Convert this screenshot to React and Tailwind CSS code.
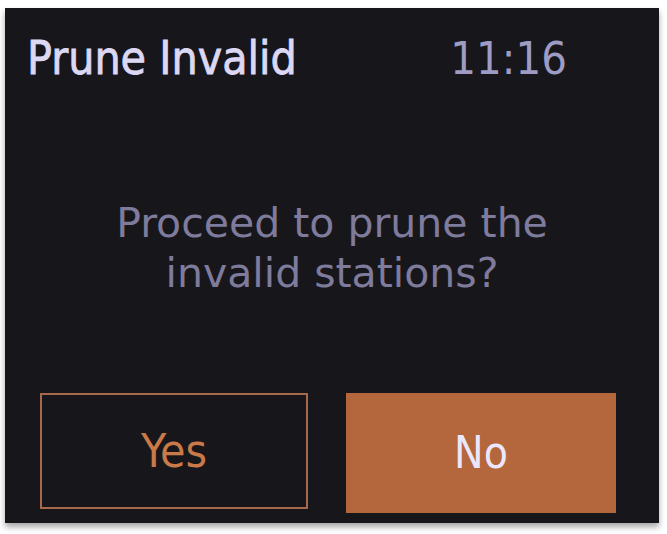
export default function App() {
  return (
    <div className="w-[667px] h-[534px] bg-white pt-[8px] pl-[5px]">
      <div
        className="w-[654px] h-[515px] bg-[#17171b] flex flex-col shadow-[0_4px_6px_rgba(0,0,0,0.35)]"
        style={{ fontFamily: '"DejaVu Sans Condensed", "DejaVu Sans", sans-serif' }}
      >
        {/* header */}
        <div className="flex items-center justify-between pl-[22px] pr-[92px] pt-[20px] h-[80px]">
          <span className="text-[46px] leading-none text-[#dcd8f4] [-webkit-text-stroke:0.8px_#dcd8f4]">Prune Invalid</span>
          <span className="text-[45px] leading-none text-[#9e9bc4] font-extralight">11:16</span>
        </div>

        {/* message */}
        <div
          className="flex-1 flex flex-col items-center justify-center text-[41px] leading-[50px] text-[#7e7b9c] pt-[14px]"
          style={{ fontFamily: '"DejaVu Sans", sans-serif' }}
        >
          <p>Proceed to prune the</p>
          <p>invalid stations?</p>
        </div>

        {/* buttons */}
        <div className="flex gap-[38px] pl-[35px] pb-[10px]">
          <button className="w-[268px] h-[116px] border-2 border-[#a8684c] text-[#c97a48] text-[46px]">
            Yes
          </button>
          <button className="w-[270px] h-[120px] bg-[#b4673d] text-[#ebe6fb] text-[44px]">
            No
          </button>
        </div>
      </div>
    </div>
  );
}
